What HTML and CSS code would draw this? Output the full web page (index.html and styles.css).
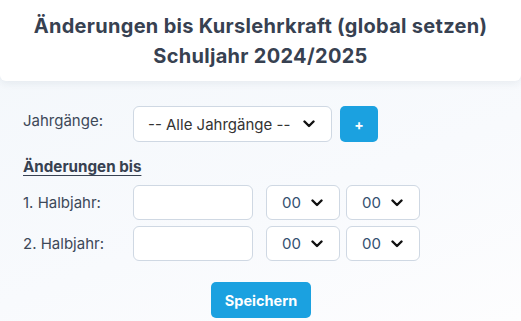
FILE: index.html
```html
<!DOCTYPE html>
<html lang="de">
<head>
<meta charset="utf-8">
<title>Änderungen bis Kurslehrkraft</title>
<link rel="stylesheet" href="styles.css">
</head>
<body>
<header class="head">
  <h1 class="title">Änderungen bis Kurslehrkraft (global setzen)<br>Schuljahr 2024/2025</h1>
</header>
<main class="content">
  <div class="row row-top">
    <label class="label">Jahrgänge:</label>
    <div class="select select-wide"><span class="select-text">-- Alle Jahrgänge --</span><svg class="chev" width="12" height="8" viewBox="0 0 12 8"><path d="M1.5 1.5 L6 6 L10.5 1.5" fill="none" stroke="#111" stroke-width="2.4" stroke-linecap="round" stroke-linejoin="round"/></svg></div>
    <button class="btn btn-plus">+</button>
  </div>
  <h2 class="section">Änderungen bis</h2>
  <div class="row">
    <label class="label">1. Halbjahr:</label>
    <div class="input"></div>
    <div class="select select-small"><span class="select-num">00</span><svg class="chev" width="12" height="8" viewBox="0 0 12 8"><path d="M1.5 1.5 L6 6 L10.5 1.5" fill="none" stroke="#111" stroke-width="2.4" stroke-linecap="round" stroke-linejoin="round"/></svg></div>
    <div class="select select-small"><span class="select-num">00</span><svg class="chev" width="12" height="8" viewBox="0 0 12 8"><path d="M1.5 1.5 L6 6 L10.5 1.5" fill="none" stroke="#111" stroke-width="2.4" stroke-linecap="round" stroke-linejoin="round"/></svg></div>
  </div>
  <div class="row">
    <label class="label">2. Halbjahr:</label>
    <div class="input"></div>
    <div class="select select-small"><span class="select-num">00</span><svg class="chev" width="12" height="8" viewBox="0 0 12 8"><path d="M1.5 1.5 L6 6 L10.5 1.5" fill="none" stroke="#111" stroke-width="2.4" stroke-linecap="round" stroke-linejoin="round"/></svg></div>
    <div class="select select-small"><span class="select-num">00</span><svg class="chev" width="12" height="8" viewBox="0 0 12 8"><path d="M1.5 1.5 L6 6 L10.5 1.5" fill="none" stroke="#111" stroke-width="2.4" stroke-linecap="round" stroke-linejoin="round"/></svg></div>
  </div>
  <div class="actions">
    <button class="btn btn-save">Speichern</button>
  </div>
</main>
</body>
</html>
```
FILE: styles.css
```css
* { box-sizing: border-box; }
html, body { margin: 0; height: 100%; }
body {
  font-family: Inter, "Noto Sans", sans-serif;
  color: #3d4858;
  background: linear-gradient(160deg, #f3f7fb 0%, #f8fafd 60%, #fdfdfe 100%);
  overflow: hidden;
}
.head {
  background: #fff;
  height: 81px;
  border-radius: 0 0 6px 6px;
  box-shadow: 0 2px 8px rgba(30, 50, 80, 0.08);
  display: flex;
  justify-content: center;
  padding-top: 11px;
}
.title {
  margin: 0;
  font-size: 20px;
  font-weight: 700;
  line-height: 30px;
  text-align: center;
  color: #374151;
  letter-spacing: 0.3px;
}
.content {
  padding: 25px 23px 0;
}
.row {
  display: flex;
  align-items: center;
  height: 35px;
  margin-bottom: 6px;
}
.row-top { height: 36px; margin-bottom: 0; }
.label {
  width: 110px;
  font-size: 15px;
  color: #3d4858;
}
.row-top .label { margin-top: -8px; }
.select {
  height: 100%;
  background: #fff;
  border: 1px solid #cfd8e3;
  border-radius: 6px;
  display: flex;
  align-items: center;
  justify-content: space-between;
}
.select-wide {
  width: 199px;
  padding: 0 16px 0 14px;
}
.select-text { font-size: 15px; color: #333; }
.select-small {
  width: 74px;
  padding: 0 16px 0 15px;
  margin-left: 6px;
}
.input + .select-small { margin-left: 13px; }
.select-num { font-size: 15px; color: #34506f; }
.input {
  width: 120px;
  height: 100%;
  background: #fff;
  border: 1px solid #cfd8e3;
  border-radius: 6px;
}
.btn {
  border: 0;
  background: #1ba1e0;
  color: #fff;
  font-family: inherit;
  font-weight: 700;
  border-radius: 5px;
}
.btn-plus {
  width: 38px;
  height: 36px;
  margin-left: 8px;
  font-size: 14px;
}
.section {
  margin: 14px 0 8px;
  font-size: 15.2px;
  font-weight: 700;
  text-decoration: underline;
  text-underline-offset: 3px;
  color: #374151;
  line-height: 21px;
}
.actions {
  display: flex;
  justify-content: center;
  padding-top: 15px;
  padding-left: 1px;
}
.btn-save {
  width: 100px;
  height: 36px;
  font-size: 14.5px;
}
```
